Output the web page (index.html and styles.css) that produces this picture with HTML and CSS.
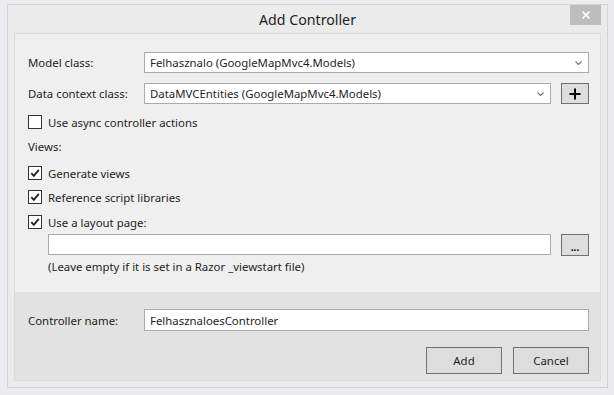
FILE: index.html
```html
<!DOCTYPE html>
<html>
<head>
<meta charset="utf-8">
<link rel="stylesheet" href="styles.css">
</head>
<body>
<div class="window">
  <div class="titlebar">
    <span class="title">Add Controller</span>
    <button class="close" aria-label="Close">
      <svg width="10" height="10" viewBox="0 0 10 10"><path d="M1.5 1.5 L8.5 8.5 M8.5 1.5 L1.5 8.5" stroke="#fff" stroke-width="1.6"/></svg>
    </button>
  </div>
  <div class="panel">
    <div class="main">
      <div class="field-row">
        <span class="lbl">Model class:</span>
        <div class="select grow"><span>Felhasznalo (GoogleMapMvc4.Models)</span>
          <svg class="chev" width="7" height="4" viewBox="0 0 7 4"><path d="M0.5 0.5 L3.5 3.5 L6.5 0.5" fill="none" stroke="#777" stroke-width="1.1"/></svg>
        </div>
      </div>
      <div class="field-row gap10">
        <span class="lbl">Data context class:</span>
        <div class="select grow"><span>DataMVCEntities (GoogleMapMvc4.Models)</span>
          <svg class="chev" width="7" height="4" viewBox="0 0 7 4"><path d="M0.5 0.5 L3.5 3.5 L6.5 0.5" fill="none" stroke="#777" stroke-width="1.1"/></svg>
        </div>
        <button class="sq-btn plus">
          <svg width="12" height="12" viewBox="0 0 12 12"><path d="M6 0.5 V11.5 M0.5 6 H11.5" stroke="#000" stroke-width="2"/></svg>
        </button>
      </div>
      <div class="check-row m11">
        <span class="cb"></span><span>Use async controller actions</span>
      </div>
      <div class="section">Views:</div>
      <div class="check-row m11">
        <span class="cb"><svg width="12" height="12" viewBox="0 0 12 12"><path d="M2.3 6.2 L4.8 8.8 L9.8 2.8" fill="none" stroke="#222" stroke-width="1.8"/></svg></span><span>Generate views</span>
      </div>
      <div class="check-row m10">
        <span class="cb"><svg width="12" height="12" viewBox="0 0 12 12"><path d="M2.3 6.2 L4.8 8.8 L9.8 2.8" fill="none" stroke="#222" stroke-width="1.8"/></svg></span><span>Reference script libraries</span>
      </div>
      <div class="check-row m11">
        <span class="cb"><svg width="12" height="12" viewBox="0 0 12 12"><path d="M2.3 6.2 L4.8 8.8 L9.8 2.8" fill="none" stroke="#222" stroke-width="1.8"/></svg></span><span>Use a layout page:</span>
      </div>
      <div class="path-row">
        <div class="input grow"></div>
        <button class="sq-btn dots">...</button>
      </div>
      <div class="hint">(Leave empty if it is set in a Razor _viewstart file)</div>
    </div>
    <div class="footer">
      <div class="field-row name-row">
        <span class="lbl">Controller name:</span>
        <div class="input grow text">FelhasznaloesController</div>
      </div>
      <div class="buttons">
        <button class="btn">Add</button>
        <button class="btn">Cancel</button>
      </div>
    </div>
  </div>
</div>
</body>
</html>
```

FILE: styles.css
```css
* { box-sizing: border-box; }
html, body { margin: 0; padding: 0; }
body {
  background: #ececf0;
  width: 614px;
  height: 395px;
  overflow: hidden;
  font-family: "Noto Sans", "Open Sans", sans-serif;
  font-size: 11.4px;
  color: #000;
}
.window {
  margin: 4px 0 0 7px;
  width: 601px;
  height: 384px;
  background: #ebebeb;
  border: 1px solid #d4d4d4;
  display: flex;
  flex-direction: column;
}
.titlebar {
  position: relative;
  height: 28px;
  flex: none;
  display: flex;
  align-items: center;
  justify-content: center;
}
.title {
  font-size: 14.2px;
  color: #1e1e1e;
}
.close {
  position: absolute;
  top: 0;
  right: 6px;
  width: 31px;
  height: 20px;
  border: 0;
  padding: 0;
  background: #bdbdbd;
  display: flex;
  align-items: center;
  justify-content: center;
}
.panel {
  margin: 0 6px;
  height: 348px;
  border: 1px solid #dadada;
  background: #efefef;
  display: flex;
  flex-direction: column;
}
.main {
  height: 258px;
  flex: none;
  padding: 18px 11px 0 13px;
}
.field-row {
  display: flex;
  align-items: center;
  height: 21px;
}
.gap10 { margin-top: 10px; }
.lbl {
  width: 116px;
  flex: none;
  color: #1e1e1e;
}
.grow { flex: 1; }
.select, .input {
  height: 21px;
  background: #fff;
  border: 1px solid #ababab;
  display: flex;
  align-items: center;
  padding-left: 5px;
  color: #1e1e1e;
}
.select span { flex: 1; }
.chev { margin-right: 6px; }
.sq-btn {
  width: 28px;
  height: 21px;
  margin-left: 10px;
  flex: none;
  background: #dddddd;
  border: 1px solid #707070;
  padding: 0;
  display: flex;
  align-items: center;
  justify-content: center;
  font-family: inherit;
}
.check-row {
  display: flex;
  align-items: center;
  height: 14px;
  color: #1e1e1e;
}
.m10 { margin-top: 10px; }
.m11 { margin-top: 11px; }
.cb {
  width: 14px;
  height: 14px;
  border: 1px solid #333;
  background: #fff;
  margin-right: 6px;
  display: flex;
  align-items: center;
  justify-content: center;
  flex: none;
}
.section {
  margin-top: 10px;
  line-height: 16px;
  color: #1e1e1e;
}
.path-row {
  margin-top: 5px;
  margin-left: 20px;
  display: flex;
  align-items: flex-start;
  height: 22px;
}
.dots {
  height: 22px;
  font-size: 10px;
  font-weight: bold;
  line-height: 1;
  padding-top: 4px;
  color: #000;
}
.hint {
  margin-top: 3px;
  margin-left: 20px;
  line-height: 16px;
  color: #1e1e1e;
}
.footer {
  flex: 1;
  background: #e2e2e2;
  padding: 17px 11px 0 13px;
}
.name-row { height: 22px; }
.name-row .input { height: 22px; }
.buttons {
  margin-top: 16px;
  display: flex;
  justify-content: flex-end;
  gap: 11px;
}
.btn {
  width: 76px;
  height: 27px;
  background: #dddddd;
  border: 1px solid #707070;
  font-family: inherit;
  font-size: 11.4px;
  color: #1e1e1e;
  padding: 0;
}
```
